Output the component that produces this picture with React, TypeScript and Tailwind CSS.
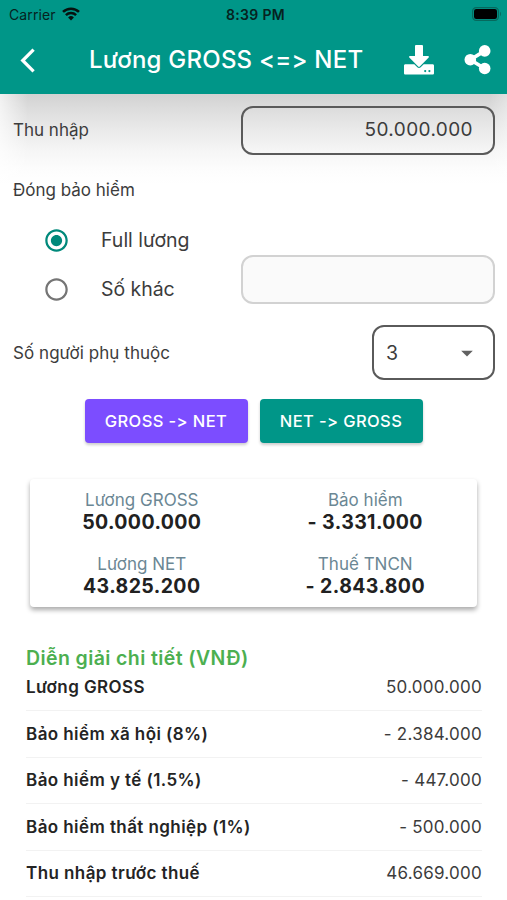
import React from "react";
import { MdArrowDropDown, MdRadioButtonChecked, MdRadioButtonUnchecked } from "react-icons/md";

function WifiIcon() {
  return (
    <svg viewBox="0 0 18 14" className="h-[14px] w-[18px]" fill="none" stroke="#06120f">
      <path d="M1 4.9a11.6 11.6 0 0 1 16 0" strokeWidth="2.6" />
      <path d="M3.9 8.1a7.4 7.4 0 0 1 10.2 0" strokeWidth="2.5" />
      <path d="M9 13.4 6.1 10.5a4.2 4.2 0 0 1 5.8 0z" fill="#06120f" stroke="none" />
    </svg>
  );
}

function BatteryIcon() {
  return (
    <svg viewBox="0 0 30 14" className="h-[14px] w-[30px]">
      <rect x="0.6" y="0.6" width="25.8" height="12.8" rx="3.6" fill="none" stroke="#06695d" strokeWidth="1.2" />
      <rect x="2" y="2" width="23" height="10" rx="2.2" fill="#000" />
      <path d="M28 4.8c1.3.6 1.3 3.8 0 4.4z" fill="#06695d" />
    </svg>
  );
}

function BackIcon() {
  return (
    <svg viewBox="0 0 29 29" className="size-[29px]" fill="none" stroke="#fff" strokeWidth="3.2">
      <path d="M13.600 3.600 2.700 14.500l10.900 10.900" />
    </svg>
  );
}

function ShareIcon() {
  return (
    <svg viewBox="0 0 27 30" className="ml-[30px] h-[30px] w-[27px] shrink-0" fill="#fff" stroke="#fff">
      <path d="M20.700 5.900 6.300 14.700l14.400 8.800" fill="none" strokeWidth="3.6" />
      <circle cx="6.300" cy="14.700" r="5.800" stroke="none" />
      <circle cx="20.700" cy="5.900" r="5.800" stroke="none" />
      <circle cx="20.700" cy="23.500" r="5.800" stroke="none" />
    </svg>
  );
}

function DownloadIcon() {
  return (
    <svg viewBox="0 0 30 30" className="h-[30px] w-[30px]" fill="#fff">
      <path d="M12 0h6a1 1 0 0 1 1 1v10h5c.9 0 1.300 1 .7 1.600l-8.900 8.900a1.150 1.150 0 0 1-1.600 0L5.300 12.600C4.700 12 5.100 11 6 11h5V1a1 1 0 0 1 1-1z" />
      <path
        fillRule="evenodd"
        d="M1.400 19.300h8.900l3 3a2.500 2.500 0 0 0 3.400 0l3-3h8.900c.8 0 1.400.6 1.400 1.400v7.500c0 .8-.6 1.400-1.400 1.400H1.400C.6 29.600 0 29 0 28.200v-7.500c0-.8.6-1.400 1.400-1.400zM21.200 25a1.100 1.100 0 1 0 0 2.200 1.100 1.100 0 0 0 0-2.200zm4.200 0a1.100 1.100 0 1 0 0 2.200 1.100 1.100 0 0 0 0-2.200z"
      />
    </svg>
  );
}

const summary = [
  ["Lương GROSS", "50.000.000"],
  ["Bảo hiểm", "- 3.331.000"],
  ["Lương NET", "43.825.200"],
  ["Thuế TNCN", "- 2.843.800"],
];

const details = [
  ["Lương GROSS", "50.000.000"],
  ["Bảo hiểm xã hội (8%)", "- 2.384.000"],
  ["Bảo hiểm y tế (1.5%)", "- 447.000"],
  ["Bảo hiểm thất nghiệp (1%)", "- 500.000"],
  ["Thu nhập trước thuế", "46.669.000"],
];

export default function App() {
  return (
    <div className="flex h-[900px] w-[507px] flex-col overflow-hidden whitespace-nowrap bg-white font-['Inter',sans-serif] text-[#3c3c3c] [font-feature-settings:'calt'_0]">
      <header className="h-[94px] shrink-0 bg-[#009688]">
        <div className="grid h-7 grid-cols-3 items-center pl-[9px] pr-[5px] text-[14px] text-[#06231f]">
          <div className="flex items-center gap-[6px]">
            <span className="tracking-[0.1px]">Carrier</span>
            <WifiIcon />
          </div>
          <span className="text-center text-[14px] font-semibold tracking-[0.35px]">8:39 PM</span>
          <div className="-mt-px flex justify-end">
            <BatteryIcon />
          </div>
        </div>
        <div className="flex h-[64px] items-center pl-[20px] pr-4 text-white">
          <BackIcon />
          <h1 className="ml-[40px] w-[315px] text-[24px] font-medium tracking-[0.23px]">Lương GROSS &lt;=&gt; NET</h1>
          <DownloadIcon />
          <ShareIcon />
        </div>
      </header>

      <main className="flex-1 bg-[linear-gradient(to_right,#ffffffb0_0,#fff0_28px,#fff0_490px,#ffffff50_507px),linear-gradient(to_bottom,#d2d2d2_0,#dcdcdc_14px,#eaeaea_36px,#f6f6f6_58px,#fcfcfc_74px,#fff_90px)]">
        <div className="flex h-[73px] items-center justify-between pl-[13px] pr-3 text-[17px]">
          <span className="mt-px">Thu nhập</span>
          <div className="flex h-[49px] w-[254px] items-center justify-end rounded-xl border-2 border-[#5a5a5a] pr-[20px] text-[19px] tracking-[0.4px]">
            50.000.000
          </div>
        </div>
        <div className="flex h-11 items-center pl-[13px] pt-[3px] text-[17px]">Đóng bảo hiểm</div>
        <div className="flex h-[58px] items-center pl-[43px] pt-px text-[19.5px]">
          <MdRadioButtonChecked className="mr-[31px] size-[27px] text-[#00897b]" />
          <span className="mt-px">Full lương</span>
        </div>
        <div className="-mt-[14px] flex h-[49px] items-center pl-[43px] pr-3 text-[19.5px]">
          <MdRadioButtonUnchecked className="mr-[31px] mt-[19px] size-[27px] text-[#757575]" />
          <span className="mt-[21px] tracking-[-0.05px]">Số khác</span>
          <div className="ml-auto h-[49px] w-[254px] rounded-xl border-2 border-[#d2d2d2] bg-[#fafafa]" />
        </div>
        <div className="mt-[21px] flex h-[55px] items-center justify-between pl-[13px] pr-3 text-[17px]">
          <span className="mt-[2px] tracking-[0.05px]">Số người phụ thuộc</span>
          <div className="flex h-[55px] w-[123px] items-center justify-between rounded-xl border-2 border-[#5a5a5a] pl-[12px] pr-[12px] text-[19.5px]">
            <span className="mt-[2px]">3</span>
            <MdArrowDropDown className="size-[28px] text-[#616161]" />
          </div>
        </div>
        <div className="mt-[19px] flex justify-center gap-3 text-[16.5px] font-medium tracking-[0.4px] text-white">
          <button className="h-11 w-[163px] rounded-[4px] bg-[#7c4dff] pt-px shadow-[0_2px_3px_#0003]">GROSS -&gt; NET</button>
          <button className="h-11 w-[163px] rounded-[4px] bg-[#009688] pt-px shadow-[0_2px_3px_#0003]">NET -&gt; GROSS</button>
        </div>
        <section className="mx-[30px] mt-9 grid h-[128px] grid-cols-2 rounded-[4px] bg-white pt-[10px] text-center shadow-[0_3px_5px_#0005]">
          {summary.map(([label, value]) => (
            <div key={label} className="h-[63.500px]">
              <div className="text-[17px] leading-[22px] text-[#6b8794]">{label}</div>
              <div className="text-[19.5px] font-bold leading-[22px] tracking-[0.4px] text-[#212121]">{value}</div>
            </div>
          ))}
        </section>
        <section className="ml-[26px] mr-[25px] mt-[38px] text-[17px]">
          <h2 className="text-[19.5px] font-semibold leading-[26px] tracking-[0.4px] text-[#4caf50]">Diễn giải chi tiết (VNĐ)</h2>
          <div className="-mt-[6px]">
            {details.map(([label, value]) => (
              <div key={label} className="flex h-[46.400px] items-center justify-between border-b border-[#f2f2f2]">
                <span className="mt-px font-semibold tracking-[0.42px] text-[#242424]">{label}</span>
                <span className="mt-px tracking-[0.25px]">{value}</span>
              </div>
            ))}
          </div>
        </section>
      </main>
    </div>
  );
}
